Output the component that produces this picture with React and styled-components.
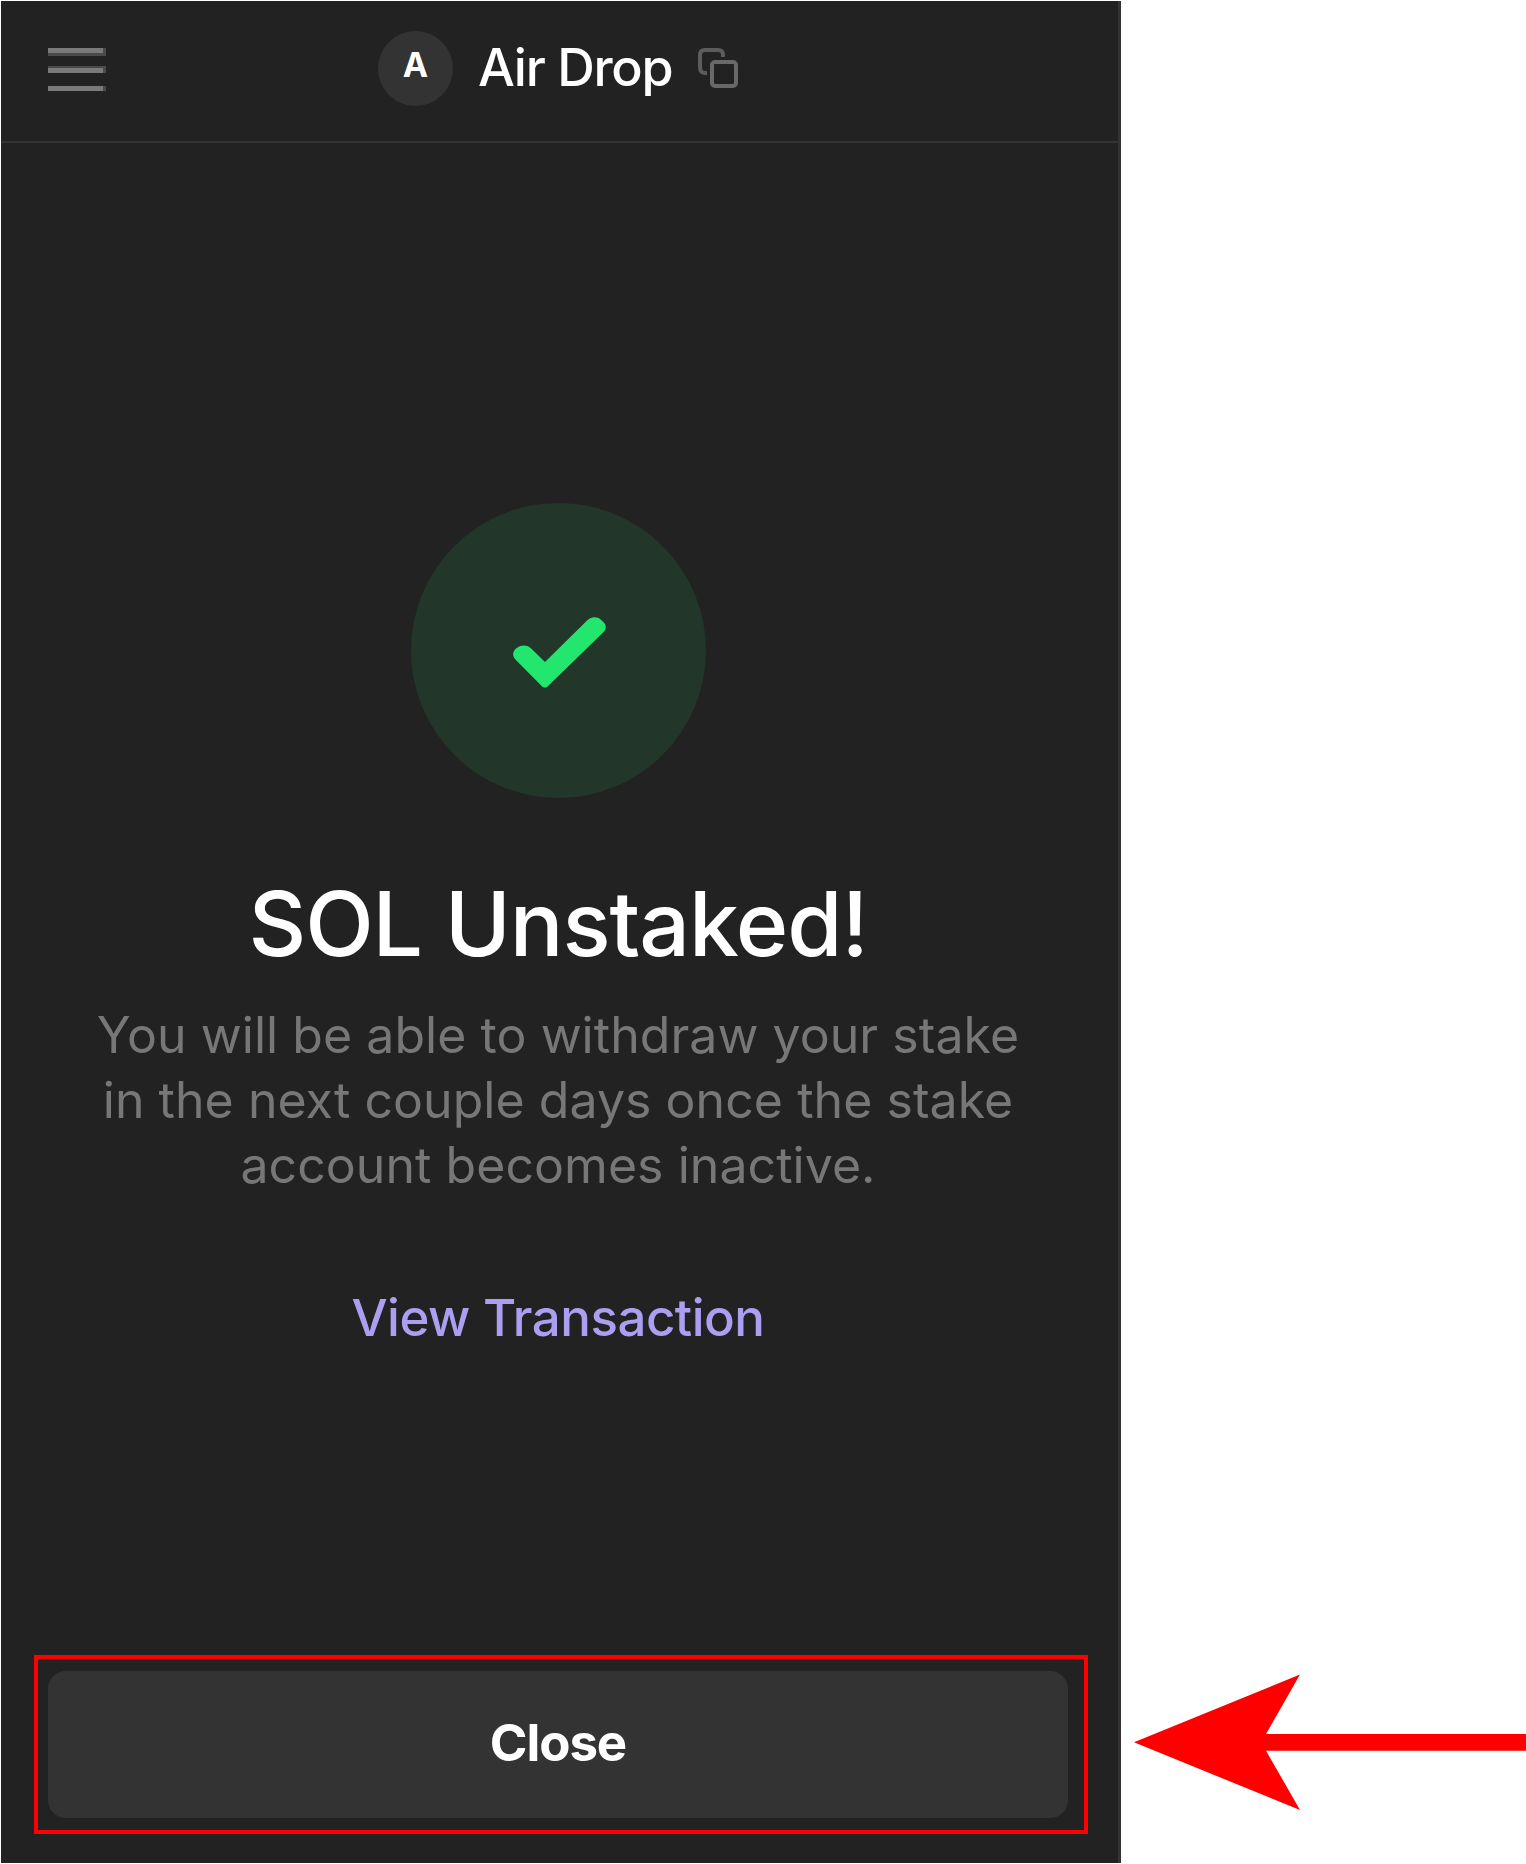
import React from "react";
import styled, { createGlobalStyle } from "styled-components";

const GlobalStyle = createGlobalStyle`
  * { box-sizing: border-box; }
  body { margin: 0; background: #fff; font-family: Inter, "Liberation Sans", sans-serif; }
`;

const Page = styled.div`
  display: flex;
  width: 1526px;
  height: 1864px;
  padding: 1px 0 1px 1px;
  background: #fff;
  overflow: hidden;
`;

const Wallet = styled.main`
  display: flex;
  flex-direction: column;
  flex: none;
  width: 1120px;
  background: #222;
  border-right: 3px solid #333;
`;

const Header = styled.header`
  display: grid;
  grid-template-columns: 377px 1fr;
  height: 142px;
  border-bottom: 2px solid #333;
`;

const MenuButton = styled.button`
  align-self: start;
  justify-self: start;
  margin: 47px 0 0 47px;
  padding: 0;
  border: 0;
  background: none;
  line-height: 0;
`;

const Account = styled.div`
  display: flex;
  align-items: flex-start;
`;

const Avatar = styled.span`
  width: 75px;
  height: 75px;
  margin-top: 30px;
  border-radius: 50%;
  background: #333;
  color: #fff;
  font-size: 34px;
  font-weight: 700;
  line-height: 67px;
  text-align: center;
`;

const AccountName = styled.span`
  width: 195px;
  margin: 35px 0 0 25px;
  color: #fff;
  font-size: 52px;
  font-weight: 500;
  line-height: 64px;
  letter-spacing: -1.25px;
  white-space: nowrap;
`;

const CopyIcon = styled.svg`
  margin: 46px 0 0 24px;
`;

const Result = styled.section`
  display: flex;
  flex: 1;
  flex-direction: column;
  align-items: center;
  padding: 360px 3px 0 0;
`;

const Badge = styled.div`
  width: 295px;
  height: 295px;
  border-radius: 50%;
  background: #23362a;
`;

const Title = styled.h1`
  margin: 72px 0 0;
  color: #fff;
  font-size: 89.4px;
  font-weight: 500;
  line-height: 108px;
  letter-spacing: -1.1px;
  white-space: nowrap;
`;

const Message = styled.p`
  margin: 25px 0 0;
  color: #777;
  font-size: 50px;
  font-weight: 400;
  line-height: 65px;
  letter-spacing: 0.05px;
  text-align: center;
  white-space: nowrap;
`;

const TransactionLink = styled.a`
  margin-top: 88px;
  color: #ab9ff2;
  font-size: 51px;
  font-weight: 500;
  line-height: 64px;
  letter-spacing: -0.5px;
  white-space: nowrap;
`;

const Highlight = styled.footer`
  width: 1054px;
  height: 179px;
  margin: 0 0 29px 33px;
  padding: 12px 16px 12px 10px;
  border: 4px solid #f00;
`;

const CloseButton = styled.button`
  display: block;
  width: 1020px;
  height: 147px;
  padding: 0 0 3px;
  border: 0;
  border-radius: 18px;
  background: #333;
  color: #fff;
  font-family: inherit;
  font-size: 51px;
  font-weight: 700;
  line-height: 144px;
  letter-spacing: -1.1px;
`;

const Pointer = styled.svg`
  flex: none;
  align-self: flex-end;
  margin: 0 0 52px 12px;
`;

function MenuIcon() {
  return (
    <svg width="58" height="43" shapeRendering="crispEdges">
      <path fill="#4a4a4a" d="M0 0h58v8H0zM0 18h58v7H0zM0 38h58v5H0z" />
      <path fill="#7a7a7a" d="M0 0h55v5H0zM0 20h55v5H0zM0 38h55v5H0z" />
    </svg>
  );
}

export default function App() {
  return (
    <>
      <GlobalStyle />
      <Page>
        <Wallet>
          <Header>
            <MenuButton aria-label="Menu"><MenuIcon /></MenuButton>
            <Account>
              <Avatar>A</Avatar>
              <AccountName>Air Drop</AccountName>
              <CopyIcon width="42" height="42" fill="none">
                <path stroke="#5c5c5c" strokeWidth="4" d="M10 26H8Q3 26 3 20V8Q3 3 8 3H21Q26 3 26 8V10" />
                <rect x="15" y="15" width="24" height="24" rx="3" stroke="#696969" strokeWidth="4" />
              </CopyIcon>
            </Account>
          </Header>
          <Result>
            <Badge>
              <svg width="295" height="295" viewBox="33 39 885 885">
                <path
                  fill="#23e66f"
                  d="M428 591L347 509C336 498 337 484 350 474C364 464 380 464 392 474L435 516L562 391C575 379 590 379 603 389C620 402 621 415 610 427L442 590Q435 595 428 590Z"
                />
              </svg>
            </Badge>
            <Title>SOL Unstaked!</Title>
            <Message>
              You will be able to withdraw your stake<br />
              in the next couple days once the stake<br />
              account becomes inactive.
            </Message>
            <TransactionLink>View Transaction</TransactionLink>
          </Result>
          <Highlight>
            <CloseButton>Close</CloseButton>
          </Highlight>
        </Wallet>
        <Pointer width="393" height="137" viewBox="1133 1674 393 137">
          <path fill="#f00" d="M1134 1742.3L1300 1674.5L1266 1734H1526V1750.7H1266L1300 1810Z" />
        </Pointer>
      </Page>
    </>
  );
}
